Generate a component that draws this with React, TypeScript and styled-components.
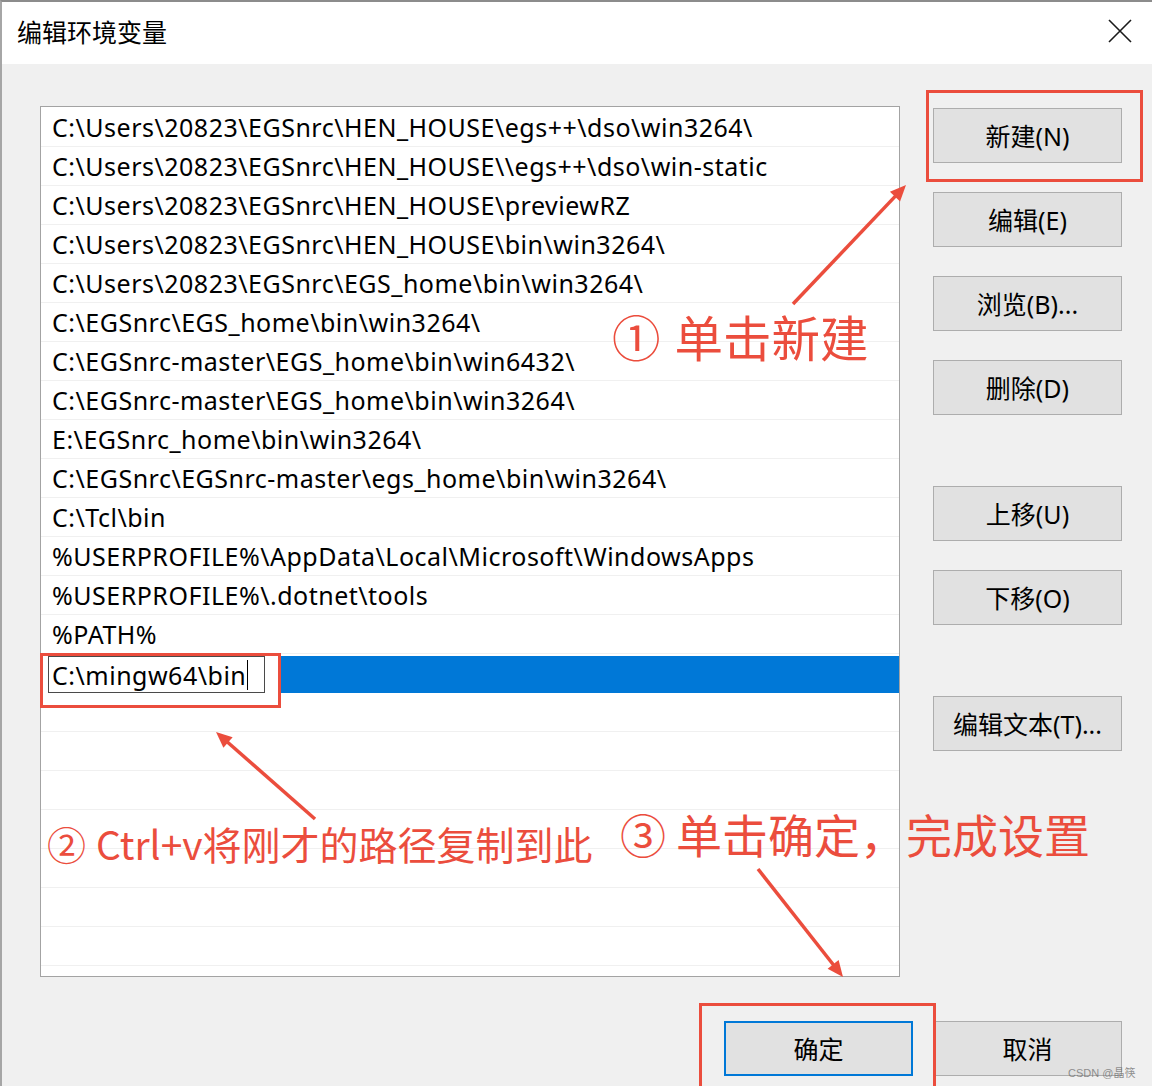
import React from "react";
import styled, { createGlobalStyle } from "styled-components";

const Global = createGlobalStyle`
  html, body { margin: 0; padding: 0; background: #f0f0f0; }
  body {
    width: 1152px;
    height: 1086px;
    overflow: hidden;
    font-family: "Noto Sans", "Noto Sans CJK SC", sans-serif;
  }
`;

const RED = "#eb4d3d";

const Window = styled.div`
  position: relative;
  width: 1152px;
  height: 1086px;
  box-sizing: border-box;
  border-top: 2px solid #8c8c8c;
  border-left: 2px solid #a6a6a6;
  background: #f0f0f0;
  display: flex;
  flex-direction: column;
  overflow: hidden;
`;

const TitleBar = styled.div`
  height: 62px;
  flex-shrink: 0;
  background: #ffffff;
  display: flex;
  align-items: center;
  justify-content: space-between;
  padding: 0 20px 0 15px;
`;

const Title = styled.div`
  font-family: "Noto Sans CJK SC", sans-serif;
  font-size: 25px;
  color: #000;
  margin-top: -4px;
`;

const CloseButton = styled.div`
  width: 24px;
  height: 24px;
  display: flex;
  align-items: center;
  justify-content: center;
  margin-top: -4px;
`;

const Body = styled.div`
  flex: 1;
  display: flex;
  flex-direction: column;
  padding: 42px 30px 0 38px;
`;

const MainRow = styled.div`
  display: flex;
  gap: 33px;
  align-items: flex-start;
`;

const ListBox = styled.div`
  width: 860px;
  height: 871px;
  box-sizing: border-box;
  border: 1px solid #a3a3a3;
  background: #ffffff;
  overflow: hidden;
  padding-top: 1px;
`;

const Row = styled.div`
  height: 39px;
  box-sizing: border-box;
  border-bottom: 1px solid #f0f0f0;
  display: flex;
  align-items: center;
  padding-left: 11px;
  font-size: 25px;
  letter-spacing: 0.5px;
  color: #000;
  white-space: nowrap;
`;

const SelectedRow = styled.div`
  height: 39px;
  box-sizing: border-box;
  display: flex;
  align-items: stretch;
  padding-top: 2px;
`;

const EditCell = styled.div`
  width: 237px;
  flex-shrink: 0;
  background: #ffffff;
  padding-left: 7px;
  box-sizing: border-box;
  display: flex;
  align-items: stretch;
`;

const EditBox = styled.div`
  width: 217px;
  box-sizing: border-box;
  border: 1px solid #4a4a4a;
  display: flex;
  align-items: center;
  padding-left: 3px;
  font-size: 25px;
  letter-spacing: 0.5px;
  color: #000;
  white-space: nowrap;
`;

const Caret = styled.span`
  display: inline-block;
  width: 1px;
  height: 30px;
  background: #000;
  margin-left: 1px;
`;

const SelectionFill = styled.div`
  flex: 1;
  background: #0078d7;
`;

const ButtonColumn = styled.div`
  display: flex;
  flex-direction: column;
  padding-top: 2px;
`;

const Button = styled.div<{ $gap?: number; $primary?: boolean }>`
  width: 189px;
  height: 55px;
  box-sizing: border-box;
  margin-top: ${(p) => p.$gap ?? 0}px;
  background: #e1e1e1;
  border: ${(p) => (p.$primary ? "2px solid #0078d7" : "1px solid #adadad")};
  display: flex;
  align-items: center;
  justify-content: center;
  font-family: "Noto Sans", "Noto Sans CJK SC", sans-serif;
  font-size: 25px;
  color: #000;
  white-space: nowrap;
  padding-bottom: 2px;
`;

const BottomRow = styled.div`
  display: flex;
  justify-content: flex-end;
  gap: 20px;
  margin-top: 44px;
`;

const Note = styled.div<{ $x: number; $y: number; $size: number }>`
  position: absolute;
  left: ${(p) => p.$x}px;
  top: ${(p) => p.$y}px;
  font-family: "Noto Sans CJK SC", sans-serif;
  font-size: ${(p) => p.$size}px;
  line-height: 1;
  color: ${RED};
  white-space: nowrap;
`;

const NoteNum = styled.span<{ $after: number }>`
  margin-right: ${(p) => p.$after}px;
`;

const Frame = styled.div<{ $x: number; $y: number; $w: number; $h: number }>`
  position: absolute;
  left: ${(p) => p.$x}px;
  top: ${(p) => p.$y}px;
  width: ${(p) => p.$w}px;
  height: ${(p) => p.$h}px;
  box-sizing: border-box;
  border: 3px solid ${RED};
  pointer-events: none;
`;

const Overlay = styled.svg`
  position: absolute;
  left: -2px;
  top: -2px;
  width: 1152px;
  height: 1086px;
  pointer-events: none;
`;

const Watermark = styled.div`
  position: absolute;
  left: 1066px;
  top: 1062px;
  font-family: "Liberation Sans", "Noto Sans CJK SC", sans-serif;
  font-size: 11px;
  color: rgba(110, 110, 110, 0.75);
  white-space: nowrap;
`;

const paths = [
  "C:\\Users\\20823\\EGSnrc\\HEN_HOUSE\\egs++\\dso\\win3264\\",
  "C:\\Users\\20823\\EGSnrc\\HEN_HOUSE\\\\egs++\\dso\\win-static",
  "C:\\Users\\20823\\EGSnrc\\HEN_HOUSE\\previewRZ",
  "C:\\Users\\20823\\EGSnrc\\HEN_HOUSE\\bin\\win3264\\",
  "C:\\Users\\20823\\EGSnrc\\EGS_home\\bin\\win3264\\",
  "C:\\EGSnrc\\EGS_home\\bin\\win3264\\",
  "C:\\EGSnrc-master\\EGS_home\\bin\\win6432\\",
  "C:\\EGSnrc-master\\EGS_home\\bin\\win3264\\",
  "E:\\EGSnrc_home\\bin\\win3264\\",
  "C:\\EGSnrc\\EGSnrc-master\\egs_home\\bin\\win3264\\",
  "C:\\Tcl\\bin",
  "%USERPROFILE%\\AppData\\Local\\Microsoft\\WindowsApps",
  "%USERPROFILE%\\.dotnet\\tools",
  "%PATH%",
];

const emptyRows = Array.from({ length: 8 });

type ArrowProps = { x1: number; y1: number; x2: number; y2: number };

function Arrow({ x1, y1, x2, y2 }: ArrowProps) {
  const dx = x2 - x1;
  const dy = y2 - y1;
  const len = Math.hypot(dx, dy);
  const ux = dx / len;
  const uy = dy / len;
  const head = 16;
  const half = 7;
  const bx = x2 - ux * head;
  const by = y2 - uy * head;
  const px = -uy;
  const py = ux;
  const pts = `${x2},${y2} ${bx + px * half},${by + py * half} ${bx - px * half},${by - py * half}`;
  return (
    <g>
      <line x1={x1} y1={y1} x2={bx + ux * 2} y2={by + uy * 2} stroke={RED} strokeWidth={3.5} />
      <polygon points={pts} fill={RED} />
    </g>
  );
}

export default function App() {
  return (
    <>
      <Global />
      <Window>
        <TitleBar>
          <Title>编辑环境变量</Title>
          <CloseButton>
            <svg width="24" height="24" viewBox="0 0 24 24">
              <path d="M1 1 L23 23 M23 1 L1 23" stroke="#1a1a1a" strokeWidth="1.6" fill="none" />
            </svg>
          </CloseButton>
        </TitleBar>
        <Body>
          <MainRow>
            <ListBox>
              {paths.map((p) => (
                <Row key={p}>{p}</Row>
              ))}
              <SelectedRow>
                <EditCell>
                  <EditBox>
                    C:\mingw64\bin
                    <Caret />
                  </EditBox>
                </EditCell>
                <SelectionFill />
              </SelectedRow>
              {emptyRows.map((_, i) => (
                <Row key={i} />
              ))}
            </ListBox>
            <ButtonColumn>
              <Button>新建(N)</Button>
              <Button $gap={29}>编辑(E)</Button>
              <Button $gap={29}>浏览(B)...</Button>
              <Button $gap={29}>删除(D)</Button>
              <Button $gap={71}>上移(U)</Button>
              <Button $gap={29}>下移(O)</Button>
              <Button $gap={71}>编辑文本(T)...</Button>
            </ButtonColumn>
          </MainRow>
          <BottomRow>
            <Button $primary>确定</Button>
            <Button>取消</Button>
          </BottomRow>
        </Body>

        <Overlay viewBox="0 0 1152 1086">
          <Arrow x1={793} y1={304} x2={906} y2={185} />
          <Arrow x1={315} y1={819} x2={216} y2={732} />
          <Arrow x1={758} y1={869} x2={843} y2={977} />
        </Overlay>

        <Frame $x={924} $y={88} $w={217} $h={92} />
        <Frame $x={38} $y={651} $w={241} $h={55} />
        <Frame $x={697} $y={1001} $w={237} $h={86} />

        <Note $x={610} $y={310} $size={48.5}>
          <NoteNum $after={14}>①</NoteNum>单击新建
        </Note>
        <Note $x={45} $y={822} $size={39}>
          <NoteNum $after={10}>②</NoteNum>Ctrl+v将刚才的路径复制到此
        </Note>
        <Note $x={618} $y={808} $size={46}>
          <NoteNum $after={10}>③</NoteNum>单击确定，完成设置
        </Note>

        <Watermark>CSDN @晶筷</Watermark>
      </Window>
    </>
  );
}
